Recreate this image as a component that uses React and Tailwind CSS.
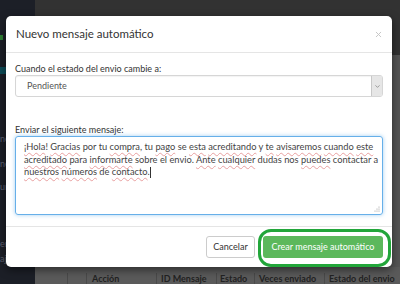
import { ChevronDown, X } from 'lucide-react';

const Sq = ({ children }) => (
  <span className="underline decoration-wavy decoration-[#e8a0a0] decoration-[0.5px] underline-offset-[2px]">{children}</span>
);

const ReglaModal = () => {
  return (
    <div className="absolute left-[6px] top-[16px] w-[386px] h-[251px] bg-white rounded-[5px] flex flex-col shadow-[0_3px_9px_rgba(0,0,0,0.5)]">
      {/* Header */}
      <div className="h-[37px] flex items-center justify-between pl-[10px] pr-[9px] border-b border-[#e5e5e5]">
        <h4 className="text-[11.5px] text-[#333] leading-none">Nuevo mensaje automático</h4>
        <X className="w-[9px] h-[9px] text-[#c4c4c4]" strokeWidth={2.5} />
      </div>

      {/* Body */}
      <div className="px-[9px] pt-[10px] flex-1">
        <label className="block text-[9px] text-[#333] leading-[12px]">Cuando el estado del envio cambie a:</label>
        <div className="h-[22px] border border-[#d6d6d6] rounded-[3px] flex items-center justify-between shadow-[inset_0_1px_1px_rgba(0,0,0,0.05)]">
          <span className="pl-[11px] text-[9px] text-[#555]">Pendiente</span>
          <span className="w-[11px] h-[20px] bg-[#e6e6e6] border-l border-[#c8c8c8] rounded-r-[2px] flex items-center justify-center">
            <ChevronDown className="w-[7px] h-[7px] text-[#666]" strokeWidth={2} />
          </span>
        </div>

        <label className="block text-[9px] text-[#333] leading-[12px] mt-[27px]">Enviar el siguiente mensaje:</label>
        <div className="relative h-[79px] border border-[#66afe9] rounded-[3px] shadow-[0_0_4px_rgba(102,175,233,0.6)] pl-[8px] pr-[2px] pt-[4px] text-[9.3px] leading-[12.5px] text-[#444] whitespace-nowrap">
          <Sq>¡Hola</Sq>! <Sq>Gracias</Sq> por tu <Sq>compra</Sq>, tu <Sq>pago</Sq> se <Sq>esta</Sq> <Sq>acreditando</Sq> y <Sq>te</Sq> <Sq>avisaremos</Sq> <Sq>cuando</Sq> <Sq>este</Sq>
          <br />
          <Sq>acreditado</Sq> para <Sq>informarte</Sq> sobre el envio. <Sq>Ante</Sq> <Sq>cualquier</Sq> dudas nos <Sq>puedes</Sq> contactar a
          <br />
          <Sq>nuestros</Sq> <Sq>números</Sq> de <Sq>contacto</Sq>.
          <span className="inline-block w-px h-[11px] bg-[#333] align-middle" />
          <svg className="absolute right-[2px] bottom-[2px]" width="6" height="6" viewBox="0 0 6 6">
            <circle cx="5" cy="1" r="0.6" fill="#999" />
            <circle cx="3" cy="3" r="0.6" fill="#999" />
            <circle cx="5" cy="3" r="0.6" fill="#999" />
            <circle cx="1" cy="5" r="0.6" fill="#999" />
            <circle cx="3" cy="5" r="0.6" fill="#999" />
            <circle cx="5" cy="5" r="0.6" fill="#999" />
          </svg>
        </div>
      </div>

      {/* Footer */}
      <div className="h-[41px] border-t border-[#e5e5e5] flex items-start justify-end gap-[8px] pt-[9px] pr-[9px]">
        <button className="h-[22px] w-[49px] border border-[#ccc] rounded-[3px] bg-white text-[9px] text-[#333]">Cancelar</button>
        <button className="h-[22px] w-[120px] rounded-[3px] bg-[#5cb85c] text-[9px] text-white whitespace-nowrap">Crear mensaje automático</button>
      </div>

      {/* highlight */}
      <div className="absolute left-[252px] top-[213px] w-[133px] h-[38px] border-[3px] border-[#22a63a] rounded-[13px]" />
    </div>
  );
};

export default function App() {
  return (
    <div className="relative w-[400px] h-[284px] overflow-hidden flex font-['Lato',sans-serif]">
      {/* Sidebar behind overlay */}
      <div className="w-[35px] h-full bg-[#1c1f27] flex flex-col text-[9px] text-[#5c6070]">
        <div className="mt-[24px] h-[8px]" />
        <div className="mt-[3px] w-[3px] h-[5px] bg-[#2e7d32]" />
        <div className="mt-[27px] h-[7px] bg-[#0e4b57]" />
        <div className="mt-[60px] leading-none">ne</div>
        <div className="mt-[16px] leading-none">ne</div>
        <div className="mt-[14px] leading-none">un</div>
        <div className="mt-[48px] leading-none">en</div>
        <div className="mt-[6px] leading-none">aje</div>
      </div>
      {/* Main content behind overlay */}
      <div className="flex-1 h-full flex flex-col">
        <div className="h-[55px] bg-[#323232]" />
        <div className="flex-1 bg-[#545454] flex flex-col justify-end">
          <div className="h-[17px] bg-[#5a5a5a] flex text-[9px] font-bold text-[#222] leading-[12px] pt-[6px] whitespace-nowrap">
            <div className="w-[33px] border-r border-[#4a4a4a]" />
            <div className="w-[19px] border-r border-[#4a4a4a]" />
            <div className="w-[70px] border-r border-[#4a4a4a] pl-[5px]">Acción</div>
            <div className="w-[60px] border-r border-[#4a4a4a] pl-[4px]">ID Mensaje</div>
            <div className="w-[38px] border-r border-[#4a4a4a] pl-[3px]">Estado</div>
            <div className="w-[70px] border-r border-[#4a4a4a] pl-[4px]">Veces enviado</div>
            <div className="flex-1 pl-[4px]">Estado del envio</div>
          </div>
        </div>
      </div>
      <ReglaModal />
    </div>
  );
}
